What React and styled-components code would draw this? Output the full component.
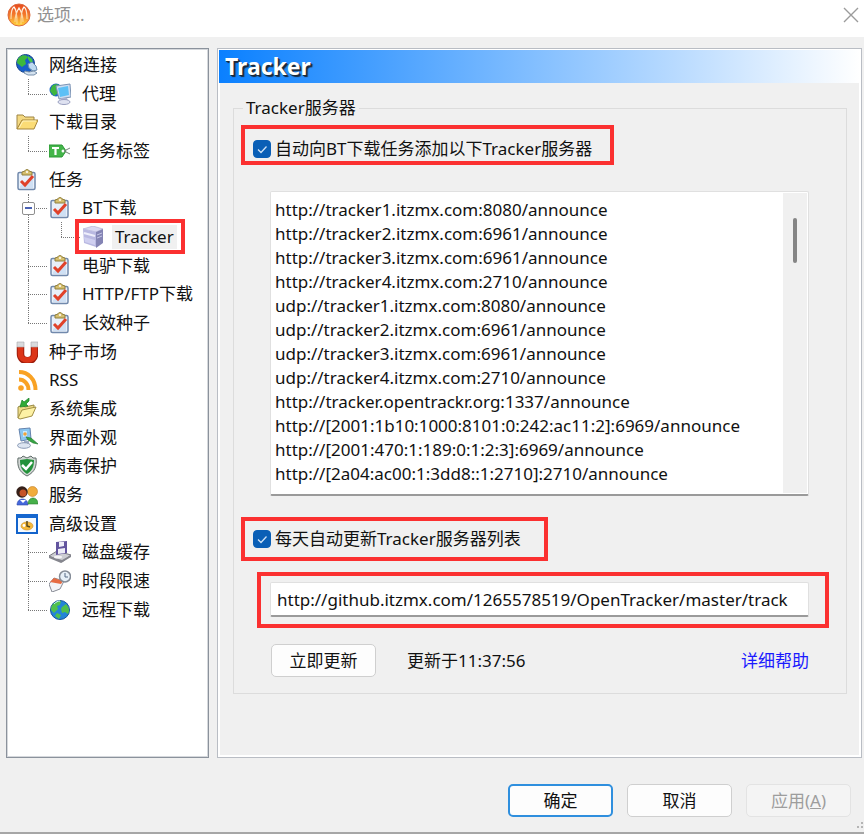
import React from 'react';
import styled, { createGlobalStyle, css } from 'styled-components';

const GlobalStyle = createGlobalStyle`
  * { box-sizing: border-box; }
  body { margin: 0; background: #f0f0f0; }
  body, button, input, textarea {
    font-family: "Noto Sans", "Noto Sans CJK SC", sans-serif;
    font-size: 17px;
    line-height: 24px;
    color: #111;
  }
`;

const Window = styled.div`
  display: flex;
  flex-direction: column;
  min-height: 100vh;
  background: #f0f0f0;
  border-bottom: 2px solid #a6a6a6;
`;

const TitleBar = styled.header`
  display: flex;
  align-items: center;
  gap: 6px;
  height: 37px;
  padding: 0 5px 8px 7px;
  background: #fff;
`;

const WindowTitle = styled.h1`
  flex: 1;
  margin: 0;
  font-size: 17px;
  font-weight: 400;
  color: #919191;
`;

const CloseButton = styled.button`
  display: flex;
  padding: 0;
  border: 0;
  background: none;
`;

const Main = styled.main`
  flex: 1;
  display: grid;
  grid-template-columns: 203px 1fr;
  gap: 8px;
  padding: 11px 2px 0 6px;
`;

const TreePanel = styled.nav`
  padding: 0 0 0 9px;
  background: #fff;
  border: 1px solid #8b929c;
  box-shadow: inset 0 0 0 1px #d5d8dc;
`;

const Tree = styled.ul`
  display: grid;
  grid-auto-rows: 29px 29px 28px;
  margin: 1px 0 0;
  padding: 0;
  list-style: none;
`;

const TreeRow = styled.li`
  display: flex;
  align-items: center;
`;

const Guide = styled.span`
  position: relative;
  align-self: stretch;
  display: flex;
  align-items: center;
  flex: none;
  width: 33px;
  &::before {
    content: "";
    position: absolute;
    left: 12px;
    top: 0;
    bottom: ${(p) => (p.$kind === 'elbow' ? '50%' : '0')};
    border-left: 1px dotted #777;
  }
  ${(p) => p.$kind !== 'line' && css`
    &::after {
      content: "";
      position: absolute;
      left: 12px;
      right: 2px;
      top: 50%;
      border-top: 1px dotted #777;
    }
  `}
`;

const Toggle = styled.button`
  position: relative;
  z-index: 1;
  display: flex;
  align-items: center;
  justify-content: center;
  width: 13px;
  height: 13px;
  margin-left: 6px;
  padding: 0;
  border: 1px solid #8f8f8f;
  border-radius: 2px;
  background: #fff;
  &::before {
    content: "";
    width: 7px;
    height: 2px;
    background: #4b62b5;
  }
`;

const TreeItem = styled.button`
  position: relative;
  display: flex;
  align-items: center;
  gap: 8px;
  padding: 0;
  border: 0;
  background: none;
  white-space: nowrap;
  ${(p) => p.$marked && css`
    &::after {
      content: "";
      position: absolute;
      inset: -6px -8px -5px -7px;
      border: 4px solid #fb3030;
    }
  `}
`;

const TreeLabel = styled.span`
  padding: 0 3px;
  background: ${(p) => (p.$selected ? '#f0f0f0' : 'transparent')};
`;

const PagePanel = styled.section`
  padding: 1px;
  border: 1px solid #b9bdc4;
  box-shadow: inset 0 0 0 2px #fff;
`;

const PageHeading = styled.h2`
  margin: 0;
  padding: 0 6px;
  font-size: 23px;
  line-height: 33px;
  font-weight: 700;
  color: #fff;
  text-shadow: 1px 1px 0 #1b2a3c, 2px 2px 1px #1b2a3c;
  background: linear-gradient(90deg, #0a80ff, #fff);
`;

const Group = styled.fieldset`
  display: flex;
  flex-direction: column;
  align-items: flex-start;
  min-width: 0;
  margin: 13px 13px 0 14px;
  padding: 5px 7px 16px;
  border: 1px solid #dcdcdc;
`;

const GroupTitle = styled.legend`
  margin-left: 2px;
  padding: 0 3px;
`;

const MarkedOption = styled.div`
  border: 4px solid #fb3030;
  padding: ${(p) => (p.$roomy ? '6px 23px 6px 8px' : '8px 18px 0 8px')};
`;

const CheckLabel = styled.label`
  display: flex;
  align-items: center;
  gap: 4px;
  white-space: nowrap;
`;

const CheckBox = styled.input`
  appearance: none;
  flex: none;
  width: 18px;
  height: 18px;
  margin: 0;
  border-radius: 4px;
  border: 1px solid #777;
  background: #fff;
  &:checked {
    border-color: #0a5fb6;
    background: #0a5fb6;
  }
`;

const CheckHolder = styled.span`
  position: relative;
  display: flex;
  svg {
    position: absolute;
    inset: 0;
    pointer-events: none;
  }
`;

const TrackerBox = styled.div`
  display: flex;
  align-self: stretch;
  margin: 26px 30px 21px 29px;
  padding: 1px;
  background: #fff;
  border: 1px solid #e0e0e0;
  border-bottom: 2px solid #9a9a9a;
  border-radius: 2px;
`;

const TrackerList = styled.textarea`
  flex: 1;
  min-width: 0;
  display: block;
  margin: 0;
  padding: 5px 3px 7px;
  border: 0;
  outline: 0;
  resize: none;
  overflow: hidden;
  white-space: pre;
  background: transparent;
`;

const ScrollTrack = styled.div`
  width: 24px;
  padding: 25px 10px;
  background: #f0f0f0;
`;

const ScrollThumb = styled.div`
  width: 4px;
  height: 45px;
  border-radius: 2px;
  background: #858585;
`;

const MarkedField = styled.div`
  align-self: stretch;
  margin: 11px 10px 0 16px;
  padding: 6px 16px 7px 9px;
  border: 4px solid #fb3030;
`;

const UrlInput = styled.input`
  display: block;
  width: 100%;
  height: 35px;
  padding: 0 2px 0 6px;
  border: 1px solid #e0e0e0;
  border-bottom: 2px solid #9a9a9a;
  border-radius: 2px;
  outline: 0;
  background: #fff;
`;

const UpdateRow = styled.div`
  display: flex;
  align-items: center;
  gap: 31px;
  align-self: stretch;
  margin: 16px 30px 0;
`;

const HelpLink = styled.a`
  margin-left: auto;
  color: #1a1aff;
  text-decoration: none;
`;

const Button = styled.button`
  width: 105px;
  height: 33px;
  padding: 0;
  background: #fdfdfd;
  border: 1px solid #cfcfcf;
  border-radius: 5px;
  ${(p) => p.$primary && css`
    border: 2px solid #2f8fde;
  `}
  &:disabled {
    color: #9d9d9d;
    background: #f4f4f4;
    border-color: #e3e3e3;
  }
`;

const Footer = styled.footer`
  position: relative;
  display: flex;
  justify-content: flex-end;
  gap: 14px;
  padding: 26px 13px 15px;
`;

const Grip = styled.svg`
  position: absolute;
  right: 0;
  bottom: 2px;
`;

const Svg = (props) => (
  <svg width="22" height="22" viewBox="0 0 22 22" fill="none" aria-hidden="true" {...props} />
);

const LogoIcon = () => (
  <svg width="24" height="24" viewBox="0 0 24 24" fill="none" aria-hidden="true">
    <defs>
      <linearGradient id="logo" x1="0" y1="0" x2="0" y2="1">
        <stop offset="0" stopColor="#e8491d" />
        <stop offset=".5" stopColor="#f47b2b" />
        <stop offset="1" stopColor="#ffd83c" />
      </linearGradient>
      <linearGradient id="logoLines" x1="0" y1="0" x2="0" y2="1">
        <stop offset="0" stopColor="#fff" />
        <stop offset="1" stopColor="#ffe9a0" stopOpacity=".5" />
      </linearGradient>
    </defs>
    <circle cx="12" cy="12" r="11" fill="url(#logo)" stroke="#dd6a3d" />
    <path d="M4 16C4 9 5 5 7 4c2 2 3 8 3 17M20 16c0-7-1-11-3-12-2 2-3 8-3 17M8 19C8 12 10 8 12 5c2 3 4 7 4 14" stroke="url(#logoLines)" strokeWidth="1.300" />
  </svg>
);

const NetworkIcon = () => (
  <Svg>
    <circle cx="9.500" cy="9.500" r="9" fill="#185fc8" stroke="#16438c" />
    <path d="M6 1.600c3-1 6 0 6 2L9 6l1 4-4 3-5-4c0-4 2-6 5-7.400z" fill="#3db83c" />
    <path d="M12 2l4 3 1 4-3-1-2-3z" fill="#45c843" />
    <path d="M12 10l4-2 4 4 1 4-4 1-4-3z" fill="#bdd9f2" stroke="#6589ad" />
    <path d="M9 17l4 1 5-1 3 2-3 2h-6l-4-2z" fill="#d4e2ef" stroke="#7890ab" />
  </Svg>
);

const ProxyIcon = () => (
  <Svg>
    <circle cx="7" cy="7" r="6.500" fill="#1f66c9" />
    <path d="M3 3c2-2 5-2 7-1L7 6l2 4-4 3-4-5z" fill="#3fb63f" />
    <path d="M7 3l14-2 1 13-12 2z" fill="#ccdcf0" stroke="#7d94b4" />
    <path d="M9 5l10-2 1 9-9 2z" fill="#5cc0f6" />
    <path d="M12 15h6l1 3H12z" fill="#aab0cf" />
    <ellipse cx="15" cy="19" rx="6" ry="2.500" fill="#dfe2f1" stroke="#9aa0c0" />
  </Svg>
);

const FolderIcon = () => (
  <Svg>
    <path d="M1 18V4h6l2 2h9v4" fill="#f4d982" stroke="#9e8544" />
    <path d="M1 18L6 9h16l-4 9z" fill="#fbdc76" stroke="#a5853a" />
    <path d="M3 17l4-7h13" stroke="#fff3bf" />
  </Svg>
);

const TagIcon = () => (
  <Svg>
    <path d="M0 5h13l4 6-4 6H0z" fill="#43b549" stroke="#2d9836" />
    <path d="M3 8h7M6.500 8v7" stroke="#fff" strokeWidth="2.200" />
    <circle cx="14" cy="11" r="1.500" fill="#fff" />
    <path d="M15 11l6-3M15 11l6 3" stroke="#77857a" />
  </Svg>
);

const TaskIcon = () => (
  <Svg>
    <rect x="2" y="3.500" width="17" height="17" rx="1.500" fill="#e8f0fa" stroke="#7189ac" strokeWidth="1.500" />
    <path d="M4 17l13-9v11H4z" fill="#cfe0f4" />
    <path d="M6 6V3l3-1c0-2 4-2 4 0l3 1v3z" fill="#d6bf6d" stroke="#91803f" />
    <circle cx="11" cy="3" r="1" fill="#fff" />
    <path d="M5 12l4 4 8-9" stroke="#e0422a" strokeWidth="3" />
  </Svg>
);

const ServerIcon = () => (
  <Svg>
    <path d="M1 3l10-3 10 3-7 3z" fill="#dadaf3" stroke="#a9a9cf" strokeWidth=".6" />
    <path d="M1 3l13 3v15L2 17z" fill="#b9b9e2" />
    <path d="M14 6l7-3v14l-7 5z" fill="#8484b4" />
    <path d="M2 7l11 3" stroke="#eeeefb" strokeWidth="2" />
    <path d="M2 11l11 3v5L3 16z" fill="#cfcff0" />
    <path d="M15 9l5-2M15 12l5-2" stroke="#c8c8e8" />
  </Svg>
);

const MagnetIcon = () => (
  <Svg>
    <path d="M4.500 6v7c0 9 14 9 14 0V6" stroke="#9f1d0b" strokeWidth="7.500" />
    <path d="M4.500 6v7c0 8 14 8 14 0V6" stroke="#dc3518" strokeWidth="5.500" />
    <path d="M1 1h7v5H1zM15 1h7v5h-7z" fill="#d9dbdd" stroke="#a7a9ab" strokeWidth=".6" />
  </Svg>
);

const RssIcon = () => (
  <Svg>
    <circle cx="5" cy="19" r="2.800" fill="#f9a224" />
    <path d="M3 10.500c5 0 9.500 4 9.500 10.500M3 3c9 0 16.500 7 16.500 18" stroke="#f9a224" strokeWidth="4" />
  </Svg>
);

const IntegrateIcon = () => (
  <Svg>
    <path d="M2 20V9l4-2 3 2 9-2v5" fill="#eedc88" stroke="#9a8a45" />
    <path d="M2 20l4-8 14-3-4 9-12 3z" fill="#fdf1a5" stroke="#a18f43" />
    <path d="M13 0L8 4 6 2 4 9l8-1-2-2 3-3z" fill="#2fab38" stroke="#19812a" strokeWidth=".7" />
  </Svg>
);

const AppearanceIcon = () => (
  <Svg>
    <path d="M3 2l11-1 1 11-10 2z" fill="#8ac6f1" stroke="#6583ad" />
    <path d="M7 4l4 0 0 5-4 1z" fill="#c8ecff" />
    <circle cx="9" cy="7" r="1.800" fill="#f0a33a" />
    <path d="M8 14h5v3H8z" fill="#9dadc6" />
    <ellipse cx="8" cy="18.500" rx="6.500" ry="2.800" fill="#dce5f1" stroke="#8a9ab5" />
    <path d="M10 10l5 1 7 6-5-1-5-3z" fill="#35a443" stroke="#23752e" strokeWidth=".6" />
  </Svg>
);

const ShieldIcon = () => (
  <Svg>
    <path d="M2 3l3 0 2-2 4 2 4-2 2 2h3c1 8-1 14-9 18C3 17 1 11 2 3z" fill="#d1d6d4" stroke="#616d6a" />
    <path d="M4 5l7-1 7 1c0 7-2 11-7 14C6 16 4 12 4 5z" fill="#23923a" />
    <path d="M6 10l4 4 6-7" stroke="#fff" strokeWidth="2.500" />
  </Svg>
);

const PeopleIcon = () => (
  <Svg>
    <path d="M1 21c0-8 11-8 11 0z" fill="#4568dc" stroke="#2d46a8" strokeWidth=".6" />
    <path d="M12 20c0-8 10-8 10 0z" fill="#46b04a" stroke="#2b7c30" strokeWidth=".6" />
    <circle cx="16.500" cy="7.500" r="5" fill="#f1ac3d" stroke="#bf7c22" strokeWidth=".6" />
    <circle cx="6" cy="8" r="5.700" fill="#352019" />
    <circle cx="7" cy="9" r="3.500" fill="#c65328" />
    <path d="M4 16l3 3 3-3" fill="#fff" />
  </Svg>
);

const AdvancedIcon = () => (
  <Svg>
    <rect x="1" y="2" width="20" height="18" fill="#f5faff" stroke="#1263cb" strokeWidth="2" />
    <path d="M0 1h22v4H0z" fill="#1667cf" />
    <ellipse cx="11" cy="13" rx="6" ry="4" fill="#f5b93a" stroke="#c98a20" strokeWidth=".6" />
    <path d="M11 8v5l3 1" stroke="#55481f" strokeWidth="1.500" />
    <circle cx="8" cy="12.500" r="1.400" fill="#fff" />
  </Svg>
);

const DiskIcon = () => (
  <Svg>
    <path d="M0 15l8-5 14 4-9 7z" fill="#cccdd2" stroke="#75767e" />
    <path d="M0 15v2l12 5 10-6v-2l-9 5z" fill="#85868e" />
    <path d="M7 1l11-1v12l-11 2z" fill="#62549e" />
    <path d="M10 1h5v4l-5 1zM9 8l7-1v5l-7 1z" fill="#eeeef8" />
    <ellipse cx="9" cy="16" rx="4" ry="1.500" fill="#f4f4f6" />
  </Svg>
);

const ClockIcon = () => (
  <Svg>
    <path d="M0 14l5-6 10 3-4 8-8 3z" fill="#f3f4f7" stroke="#888c96" />
    <path d="M1 12l4-4 9 3-2 3z" fill="#e66c43" />
    <circle cx="16" cy="6.500" r="5.500" fill="#e7f0f8" stroke="#858c97" strokeWidth="1.500" />
    <path d="M16 3v4h3" stroke="#566b85" />
  </Svg>
);

const GlobeIcon = () => (
  <Svg>
    <circle cx="11" cy="11" r="9.500" fill="#2384d8" stroke="#14539d" />
    <path d="M4 5c3-3 6-4 8-3l-1 4-3 1 1 3-4 4-3-3c0-3 1-5 2-6zM13 8l4-3c3 3 4 7 2 10l-3-2-3 1-1-4zM8 14l4 2-2 4-4-3z" fill="#4fc04d" />
    <path d="M5 5c2-2 4-3 6-3" stroke="#c8efff" />
  </Svg>
);

const treeRows = [
  { label: '网络连接', icon: NetworkIcon },
  { label: '代理', icon: ProxyIcon, guides: ['elbow'] },
  { label: '下载目录', icon: FolderIcon },
  { label: '任务标签', icon: TagIcon, guides: ['elbow'] },
  { label: '任务', icon: TaskIcon },
  { label: 'BT下载', icon: TaskIcon, guides: ['tee'], open: true },
  { label: 'Tracker', icon: ServerIcon, guides: ['line', 'elbow'], selected: true },
  { label: '电驴下载', icon: TaskIcon, guides: ['tee'] },
  { label: 'HTTP/FTP下载', icon: TaskIcon, guides: ['tee'] },
  { label: '长效种子', icon: TaskIcon, guides: ['elbow'] },
  { label: '种子市场', icon: MagnetIcon },
  { label: 'RSS', icon: RssIcon },
  { label: '系统集成', icon: IntegrateIcon },
  { label: '界面外观', icon: AppearanceIcon },
  { label: '病毒保护', icon: ShieldIcon },
  { label: '服务', icon: PeopleIcon },
  { label: '高级设置', icon: AdvancedIcon },
  { label: '磁盘缓存', icon: DiskIcon, guides: ['tee'] },
  { label: '时段限速', icon: ClockIcon, guides: ['tee'] },
  { label: '远程下载', icon: GlobeIcon, guides: ['elbow'] },
];

const trackers = [
  'http://tracker1.itzmx.com:8080/announce',
  'http://tracker2.itzmx.com:6961/announce',
  'http://tracker3.itzmx.com:6961/announce',
  'http://tracker4.itzmx.com:2710/announce',
  'udp://tracker1.itzmx.com:8080/announce',
  'udp://tracker2.itzmx.com:6961/announce',
  'udp://tracker3.itzmx.com:6961/announce',
  'udp://tracker4.itzmx.com:2710/announce',
  'http://tracker.opentrackr.org:1337/announce',
  'http://[2001:1b10:1000:8101:0:242:ac11:2]:6969/announce',
  'http://[2001:470:1:189:0:1:2:3]:6969/announce',
  'http://[2a04:ac00:1:3dd8::1:2710]:2710/announce',
].join('\n');

function Option({ id, children }) {
  return (
    <CheckLabel htmlFor={id}>
      <CheckHolder>
        <CheckBox id={id} type="checkbox" defaultChecked />
        <svg width="18" height="18" viewBox="0 0 18 18" fill="none" aria-hidden="true">
          <path d="M5 9.500l3 3 5.500-6" stroke="#cfe3f7" strokeWidth="1.300" />
        </svg>
      </CheckHolder>
      {children}
    </CheckLabel>
  );
}

export default function App() {
  return (
    <Window lang="zh-CN">
      <GlobalStyle />
      <TitleBar>
        <LogoIcon />
        <WindowTitle>选项...</WindowTitle>
        <CloseButton type="button" aria-label="关闭">
          <svg width="16" height="16" viewBox="0 0 16 16" fill="none" aria-hidden="true">
            <path d="M1 1l14 14M15 1L1 15" stroke="#9b9b9b" strokeWidth="1.400" />
          </svg>
        </CloseButton>
      </TitleBar>
      <Main>
        <TreePanel>
          <Tree>
            {treeRows.map(({ label, icon: Icon, guides = [], open, selected }) => (
              <TreeRow key={label}>
                {guides.map((kind, i) => (
                  <Guide key={i} $kind={kind}>
                    {open && <Toggle type="button" aria-label="折叠" />}
                  </Guide>
                ))}
                <TreeItem type="button" $marked={selected}>
                  <Icon />
                  <TreeLabel $selected={selected}>{label}</TreeLabel>
                </TreeItem>
              </TreeRow>
            ))}
          </Tree>
        </TreePanel>
        <PagePanel>
          <PageHeading>Tracker</PageHeading>
          <Group>
            <GroupTitle>Tracker服务器</GroupTitle>
            <MarkedOption>
              <Option id="add-trackers">自动向BT下载任务添加以下Tracker服务器</Option>
            </MarkedOption>
            <TrackerBox>
              <TrackerList aria-label="Tracker服务器" rows={12} defaultValue={trackers} />
              <ScrollTrack>
                <ScrollThumb />
              </ScrollTrack>
            </TrackerBox>
            <MarkedOption $roomy>
              <Option id="update-daily">每天自动更新Tracker服务器列表</Option>
            </MarkedOption>
            <MarkedField>
              <UrlInput
                type="text"
                aria-label="Tracker服务器列表"
                defaultValue="http://github.itzmx.com/1265578519/OpenTracker/master/track"
              />
            </MarkedField>
            <UpdateRow>
              <Button type="button">立即更新</Button>
              <span>更新于11:37:56</span>
              <HelpLink href="#help">详细帮助</HelpLink>
            </UpdateRow>
          </Group>
        </PagePanel>
      </Main>
      <Footer>
        <Button type="button" $primary>确定</Button>
        <Button type="button">取消</Button>
        <Button type="button" disabled>应用(<u>A</u>)</Button>
        <Grip width="8" height="8" viewBox="0 0 8 8" fill="#b5b5b5" aria-hidden="true">
          <path d="M5 0h2v2H5zM1 4h2v2H1zM5 4h2v2H5z" />
        </Grip>
      </Footer>
    </Window>
  );
}
